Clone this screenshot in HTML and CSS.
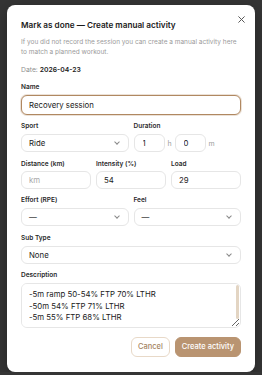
FILE: index.html
```html
<!DOCTYPE html>
<html lang="en">
<head>
  <meta charset="UTF-8" />
  <title>Mark as done</title>
  <meta name="viewport" content="width=device-width, initial-scale=1" />
  <link rel="stylesheet" href="styles.css">
</head>
<body>

  <div class="modal" role="dialog" aria-labelledby="modal-title">
    <button class="close-btn" aria-label="Close">
      <svg width="7" height="7" viewBox="0 0 10 10"><path d="M1 1L9 9M9 1L1 9" stroke="#555" stroke-width="1.4" stroke-linecap="round"/></svg>
    </button>

    <h2 id="modal-title">Mark as done — Create manual activity</h2>
    <p class="intro">If you did not record the session you can create a manual activity here to match a planned workout.</p>

    <p class="date">Date: <b>2026-04-23</b></p>

    <div class="field first">
      <label>Name</label>
      <input class="input focus" value="Recovery session" />
    </div>

    <div class="row two">
      <div class="field">
        <label>Sport</label>
        <div class="select">Ride</div>
      </div>
      <div class="field">
        <label>Duration</label>
        <div class="duration">
          <input class="input small" value="1" />
          <span>h</span>
          <input class="input small" value="0" />
          <span>m</span>
        </div>
      </div>
    </div>

    <div class="row three">
      <div class="field">
        <label>Distance (km)</label>
        <input class="input" placeholder="km" />
      </div>
      <div class="field">
        <label>Intensity (%)</label>
        <input class="input" value="54" />
      </div>
      <div class="field">
        <label>Load</label>
        <input class="input" value="29" />
      </div>
    </div>

    <div class="row two">
      <div class="field">
        <label>Effort (RPE)</label>
        <div class="select">—</div>
      </div>
      <div class="field">
        <label>Feel</label>
        <div class="select">—</div>
      </div>
    </div>

    <div class="row">
      <div class="field">
        <label>Sub Type</label>
        <div class="select">None</div>
      </div>
    </div>

    <div class="row">
      <div class="field">
        <label>Description</label>
        <div class="desc-wrap">
          <textarea class="input desc">-5m ramp 50-54% FTP 70% LTHR
-50m 54% FTP 71% LTHR
-5m 55% FTP 68% LTHR
</textarea>
          <!-- barra de scroll dibujada (headless oculta las nativas) -->
          <span class="scroll-thumb"></span>
        </div>
      </div>
    </div>

    <div class="actions">
      <button class="btn cancel">Cancel</button>
      <button class="btn primary">Create activity</button>
    </div>
  </div>

</body>
</html>
```

FILE: styles.css
```css
body {
  margin: 0;
  font-family: Inter, "Noto Sans", sans-serif;
  background: #353535;
  color: #1a1a1a;
  padding-top: 5px;
  display: flex;
  justify-content: center;
  align-items: flex-start;
}
.modal {
  position: relative;
  width: 248px;
  box-sizing: border-box;
  background: #fff;
  border-radius: 8px;
  padding: 14px 14px 15px;
  box-shadow: 0 4px 16px rgba(0,0,0,0.3);
}
.close-btn {
  position: absolute;
  top: 9px;
  right: 9px;
  background: none;
  border: none;
  padding: 0;
  width: 10px;
  height: 10px;
  display: flex;
  justify-content: center;
  align-items: center;
}
h2 {
  margin: 0;
  font-size: 8.2px;
  line-height: 12px;
  font-weight: 600;
}
.intro {
  margin: 6px 0 0;
  font-size: 6.5px;
  line-height: 10px;
  color: #9a9a9a;
}
.date {
  margin: 8px 0 0;
  font-size: 6.8px;
  line-height: 10px;
  color: #8f8f8f;
}
.date b {
  color: #1a1a1a;
  font-weight: 600;
}
.field {
  display: flex;
  flex-direction: column;
  gap: 2px;
  min-width: 0;
}
.field.first {
  margin-top: 6.5px;
}
label {
  font-size: 6.5px;
  line-height: 10px;
  font-weight: 600;
  color: #2a2a2a;
}
.row {
  margin-top: 6.5px;
  display: grid;
  gap: 5px;
}
.row.two {
  grid-template-columns: 1fr 1fr;
}
.row.three {
  grid-template-columns: 1fr 1fr 1fr;
}
.input,
.select {
  box-sizing: border-box;
  width: 100%;
  height: 18px;
  border: 1px solid #e6e6e6;
  border-radius: 6px;
  padding: 0 7px;
  font-family: inherit;
  font-size: 7.8px;
  color: #1a1a1a;
  background: #fff;
  outline: none;
}
.input::placeholder {
  color: #a8a8a8;
}
.input.focus {
  height: 20px;
  margin-top: 1px;
  border-color: #b08861;
  box-shadow: 0 0 0 1px rgba(176,136,97,0.25);
}
.select {
  display: flex;
  align-items: center;
  justify-content: space-between;
  margin-top: 1px;
}
.select::after {
  content: "";
  width: 3px;
  height: 3px;
  border-right: 1px solid #888;
  border-bottom: 1px solid #888;
  transform: rotate(45deg);
  margin: 0 2px 2px 0;
}
.duration {
  display: flex;
  align-items: center;
  gap: 3px;
  margin-top: 1px;
}
.duration .input.small {
  width: 31px;
  padding: 0 8px;
}
.duration span {
  font-size: 7px;
  color: #9a9a9a;
  width: 4px;
}
.desc-wrap {
  position: relative;
  margin-top: 1px;
}
.desc {
  display: block;
  height: 45px;
  padding: 5px 6px 8px 7px;
  line-height: 11.5px;
  resize: vertical;
  overflow-y: scroll;
}
.scroll-thumb {
  position: absolute;
  top: 2px;
  right: 2px;
  width: 3px;
  height: 34px;
  border-radius: 2px;
  background: #e3d5c3;
}
.actions {
  margin-top: 8.5px;
  display: flex;
  justify-content: flex-end;
  gap: 5px;
}
.btn {
  height: 20px;
  border-radius: 6px;
  font-family: inherit;
  font-size: 7.5px;
  font-weight: 500;
  padding: 0 6px;
  cursor: pointer;
}
.btn.cancel {
  background: #fff;
  border: 1px solid #e8d9c8;
  color: #a58462;
}
.btn.primary {
  background: #b99471;
  border: 1px solid #b99471;
  color: #fff;
}
```
